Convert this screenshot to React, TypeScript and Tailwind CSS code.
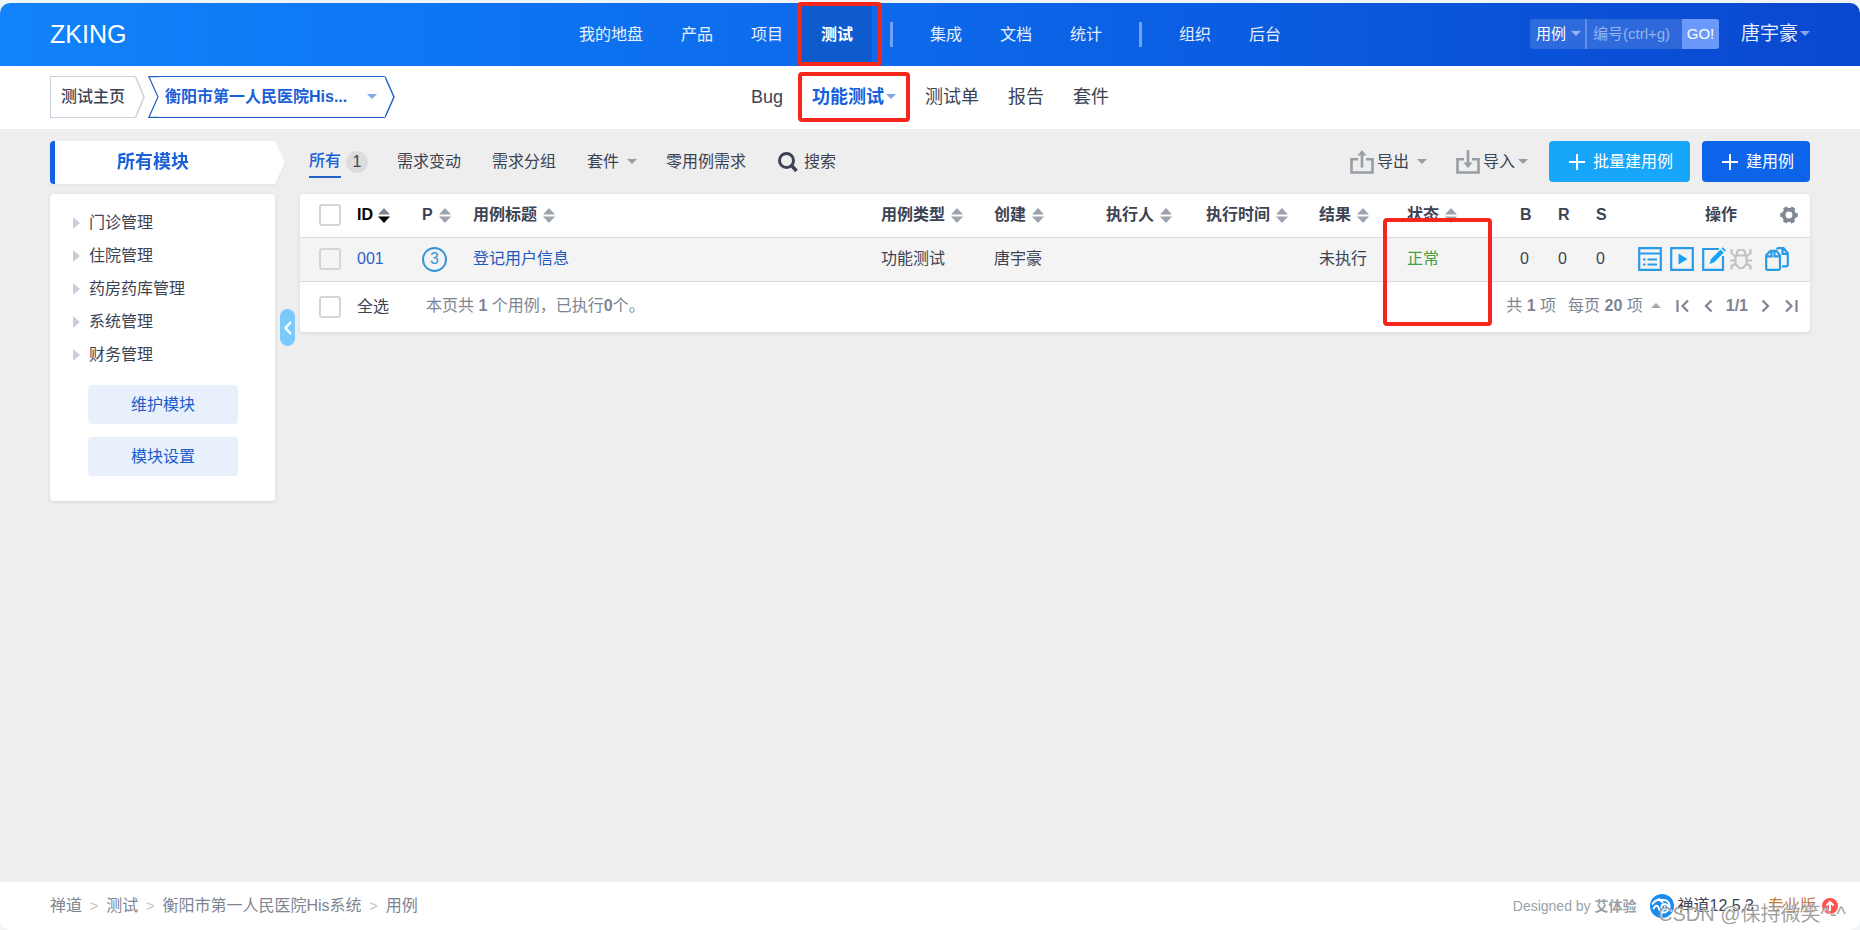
import { useState } from "react";
import type { ReactNode } from "react";

const mainNav = [
  ["我的地盘", "产品", "项目", "测试"],
  ["集成", "文档", "统计"],
  ["组织", "后台"],
];

const modules = ["门诊管理", "住院管理", "药房药库管理", "系统管理", "财务管理"];

const crumbs = ["禅道", "测试", "衡阳市第一人民医院His系统", "用例"];

const columns = [
  { label: "P", width: "w-[51px]" },
  { label: "用例标题", width: "" },
  { label: "用例类型", width: "w-[113px]" },
  { label: "创建", width: "w-[112px]" },
  { label: "执行人", width: "w-[100px]" },
  { label: "执行时间", width: "w-[113px]" },
  { label: "结果", width: "w-[88px]" },
  { label: "状态", width: "w-[113px]" },
];

function Caret({ className = "", up = false }: { className?: string; up?: boolean }) {
  return (
    <svg viewBox="0 0 10 5" className={`h-[5px] w-[10px] shrink-0 ${className}`} fill="currentColor">
      <path d={up ? "M0 5h10L5 0z" : "M0 0h10L5 5z"} />
    </svg>
  );
}

function SortIcon({ active = false }: { active?: boolean }) {
  return (
    <svg viewBox="0 0 12 15" className="h-[15px] w-3 shrink-0">
      <path d="M0 6.4 6 0l6 6.4z" fill={active ? "#80868f" : "#9ca3ad"} />
      <path d="M0 8.6 6 15l6-6.4z" fill={active ? "#000000" : "#9ca3ad"} />
    </svg>
  );
}

function Checkbox({ label }: { label: string }) {
  return (
    <input
      type="checkbox"
      aria-label={label}
      className="block size-[22px] appearance-none rounded-[3px] border-2 border-[#d5d5d5] checked:bg-[#1183fb]"
    />
  );
}

// Red marker frame laid over the element it points out
function Marker({ className }: { className: string }) {
  return <span className={`pointer-events-none absolute z-10 rounded border-4 border-[#f5261b] ${className}`} />;
}

function Plus() {
  return (
    <svg viewBox="0 0 16 16" className="size-4 shrink-0" stroke="currentColor" strokeWidth="2">
      <path d="M8 0v16M0 8h16" />
    </svg>
  );
}

function TransferIcon({ down = false }: { down?: boolean }) {
  return (
    <svg viewBox="0 0 24 24" className="size-6 shrink-0 text-[#979da5]" fill="none" stroke="currentColor" strokeWidth="2.600">
      <path d="M8 9.300H1.500v13.200h21V9.300H16" />
      <path d={down ? "M12 0v14" : "M12 4v13.500"} />
      <path d={down ? "M7.500 12.500h9L12 18z" : "M7.500 5.500h9L12 0z"} fill="currentColor" stroke="none" />
    </svg>
  );
}

function Pager({ label, d }: { label: string; d: string }) {
  return (
    <button type="button" aria-label={label} className="text-[#7d8594]">
      <svg viewBox="0 0 14 14" className="size-[14px]" fill="none" stroke="currentColor" strokeWidth="2.200">
        <path d={d} />
      </svg>
    </button>
  );
}

function Action({ label, className = "text-[#2a9ae6]", children }: { label: string; className?: string; children: ReactNode }) {
  return (
    <button type="button" aria-label={label} className={className}>
      <svg viewBox="0 0 24 24" className="size-6" fill="none" stroke="currentColor" strokeWidth="2.200">
        {children}
      </svg>
    </button>
  );
}

function Header() {
  return (
    <header className="flex h-[63px] shrink-0 items-center rounded-t-[10px] bg-linear-to-r from-[#1183fb] via-[#0d67e9] to-[#0a47cf] px-[50px] text-white">
      <a href="#" className="flex-1 pb-[2px] text-[25px] leading-8">
        ZKING
      </a>
      <nav className="flex h-full items-center">
        {mainNav.map((group, i) => (
          <div key={group[0]} className="flex h-full items-center">
            {i > 0 && <span className="mx-[18px] h-[25px] w-[3px] bg-[#6ea3f5]" />}
            {group.map((item) => (
              <a
                key={item}
                href="#"
                className={`relative flex h-full items-center px-[19px] ${
                  item === "测试" ? "bg-[#0d5bcd] font-bold" : "text-white/90"
                }`}
              >
                {item}
                {item === "测试" && <Marker className="-top-px -right-[10px] bottom-0 -left-[5px]" />}
              </a>
            ))}
          </div>
        ))}
      </nav>
      <div className="flex flex-1 items-center justify-end pb-[2px]">
        <div className="flex h-[30px] overflow-hidden rounded-[3px] bg-white/15">
          <button type="button" className="flex w-[57px] items-center justify-between border-r-2 border-white/25 pr-1 pl-[6px] text-[15px]">
            用例
            <Caret className="text-white/50" />
          </button>
          <input
            aria-label="编号"
            placeholder="编号(ctrl+g)"
            className="w-[95px] bg-transparent pl-[6px] text-[15px] outline-none placeholder:text-white/50"
          />
          <button type="button" className="w-[37px] bg-[#6b99fb] text-[15px]">
            GO!
          </button>
        </div>
        <button type="button" className="ml-[22px] flex items-center gap-[2px] text-[19px] text-white/90">
          唐宇豪
          <Caret className="text-white/50" />
        </button>
      </div>
    </header>
  );
}

function SubHeader() {
  return (
    <div className="flex h-[63px] shrink-0 items-center bg-white px-[50px] pb-[2px]">
      <div className="flex flex-1 items-center gap-[3px]">
        <a href="#" className="flex h-[42px] items-center font-medium text-[#3c4353]">
          <span className="flex h-full items-center border border-r-0 border-[#cbd0db] pr-[10px] pl-[10px]">测试主页</span>
          <svg viewBox="0 0 10 42" className="h-[42px] w-[10px]" fill="none" stroke="#cbd0db" strokeWidth="1.500">
            <path d="M.5.5 9 21 .5 41.500" />
          </svg>
        </a>
        <button type="button" className="flex h-[42px] items-center font-bold text-[#1b60d6]">
          <svg viewBox="0 0 11 42" className="h-[42px] w-[11px]" fill="none" stroke="#2262c6" strokeWidth="1.200">
            <path d="M11 .6H.8L10 21 .8 41.400H11" />
          </svg>
          <span className="flex h-full w-[226px] items-center justify-between border-y border-[#2262c6] pr-2 pl-[6px]">
            衡阳市第一人民医院His...
            <Caret className="text-[#7fa9e8]" />
          </span>
          <svg viewBox="0 0 10 42" className="h-[42px] w-[10px]" fill="none" stroke="#2262c6" strokeWidth="1.500">
            <path d="M0 .7 9 21 0 41.300" />
          </svg>
        </button>
      </div>
      <nav className="flex items-center gap-[29px] text-[18px] text-[#3c4353]">
        <a href="#">Bug</a>
        <a href="#" className="relative flex items-center gap-[2px] font-bold text-[#1460dd]">
          功能测试
          <Caret className="text-[#7fa9e8]" />
          <Marker className="-inset-x-[14px] -inset-y-[13px]" />
        </a>
        <a href="#">测试单</a>
        <a href="#">报告</a>
        <a href="#">套件</a>
      </nav>
      <div className="flex-1" />
    </div>
  );
}

function Toolbar() {
  return (
    <div className="flex h-[43px] items-center justify-between text-[#3c4353]">
      <div className="flex items-center pb-[2px] pl-[9px]">
        <a href="#" className="flex items-center gap-[5px]">
          <span className="border-b-2 border-[#2262c6] leading-[30px] font-medium text-[#1b60d6]">所有</span>
          <span className="flex size-[22px] items-center justify-center rounded-full bg-[#dcdcdc]">1</span>
        </a>
        <a href="#" className="ml-[29px]">需求变动</a>
        <a href="#" className="ml-[31px]">需求分组</a>
        <button type="button" className="ml-[31px] flex items-center gap-2">
          套件
          <Caret className="text-[#979da5]" />
        </button>
        <a href="#" className="ml-[29px]">零用例需求</a>
        <button type="button" className="ml-8 flex items-center gap-[6px]">
          <svg viewBox="0 0 20 20" className="size-5" fill="none" stroke="currentColor" strokeWidth="3">
            <circle cx="8.500" cy="8.500" r="7" />
            <path d="m13.500 13.500 5 5.500" strokeWidth="3.500" />
          </svg>
          搜索
        </button>
      </div>
      <div className="flex items-center pb-[2px]">
        <button type="button" className="flex items-center">
          <TransferIcon />
          <span className="ml-[3px]">导出</span>
          <Caret className="ml-2 text-[#979da5]" />
        </button>
        <button type="button" className="ml-[29px] flex items-center">
          <TransferIcon down />
          <span className="ml-[3px]">导入</span>
          <Caret className="ml-[3px] text-[#979da5]" />
        </button>
        <button type="button" className="ml-[21px] flex h-[41px] items-center gap-2 rounded bg-[#18a6fa] pr-[17px] pl-5 text-white">
          <Plus />
          批量建用例
        </button>
        <button type="button" className="ml-3 flex h-[41px] items-center gap-2 rounded bg-[#0c64eb] pr-4 pl-5 text-white">
          <Plus />
          建用例
        </button>
      </div>
    </div>
  );
}

function CaseTable() {
  return (
    <div className="relative mt-[10px] rounded bg-white shadow-[0_1px_4px_rgba(0,0,0,0.1)]">
      <table className="w-full table-fixed text-left text-[#3c4353]">
        <thead>
          <tr className="h-[43px] border-b border-[#dadada]">
            <th className="w-[57px] pl-[19px]">
              <Checkbox label="选择全部用例" />
            </th>
            <th className="w-[65px] text-black">
              <span className="flex items-center gap-[5px]">
                ID
                <SortIcon active />
              </span>
            </th>
            {columns.map((col) => (
              <th key={col.label} className={col.width}>
                <span className="flex items-center gap-[6px]">
                  {col.label}
                  <SortIcon />
                </span>
              </th>
            ))}
            <th className="w-[38px]">B</th>
            <th className="w-[38px]">R</th>
            <th className="w-[38px]">S</th>
            <th className="w-[176px]">
              <span className="flex items-center justify-between pr-3 pl-[71px]">
                操作
                <svg viewBox="0 0 18 18" className="size-[18px]" fill="none" stroke="#808896">
                  <circle cx="9" cy="9" r="5.300" strokeWidth="3.800" />
                  <circle cx="9" cy="9" r="7.600" strokeWidth="2.400" strokeDasharray="4.200 3.759" strokeDashoffset="2.100" />
                </svg>
              </span>
            </th>
          </tr>
        </thead>
        <tbody>
          <tr className="h-[44px] border-b border-[#dadada] bg-[#f4f4f4]">
            <td className="pl-[19px]">
              <Checkbox label="选择用例 001" />
            </td>
            <td>
              <a href="#" className="text-[#2b62cc]">001</a>
            </td>
            <td>
              <span className="flex size-[25px] items-center justify-center rounded-full border-2 border-[#3796d8] text-[#3796d8]">
                3
              </span>
            </td>
            <td>
              <a href="#" className="text-[#1f5bbd]">登记用户信息</a>
            </td>
            <td>功能测试</td>
            <td>唐宇豪</td>
            <td />
            <td />
            <td>未执行</td>
            <td className="text-[#43a047]">正常</td>
            <td>0</td>
            <td>0</td>
            <td>0</td>
            <td>
              <div className="flex items-center pl-1">
                <Action label="详情">
                  <path d="M1.200 1.200h21.600v21.600H1.200zM1 6.500h22M9.500 12.500H19M9.500 17.500H19M5 12.500h2.500M5 17.500h2.500" />
                </Action>
                <Action label="执行" className="ml-2 text-[#2a9ae6]">
                  <path d="M1.200 1.200h21.600v21.600H1.200z" />
                  <path d="M8.500 6.500v11l9-5.500z" fill="#18a0f5" stroke="none" />
                </Action>
                <Action label="编辑" className="ml-2 text-[#2a9ae6]">
                  <path d="M17 2H1.200v20.800H21V9" />
                  <path d="m7.500 17 1.500-5L18.500 2.500l3.200 3.200-9.500 9.500zM19.500 1.500l1.200-1.300L24 3.300l-1.300 1.400z" fill="#18a0f5" stroke="none" />
                </Action>
                <Action label="转Bug" className="ml-[3px] text-[#c2c2c2]">
                  <path d="M6.500 8.500h11V17l-3.500 4h-4l-3.500-4zM8 8.500V5l1.500-2h5L16 5v3.500M2.500 2v4l4 3.500M21.500 2v4l-4 3.500M1 13.500h5.500M17.500 13.500H23M2.500 22.500v-3.500l4-2.500M21.500 22.500v-3.500l-4-2.500" />
                </Action>
                <Action label="复制" className="ml-3 text-[#2a9ae6]">
                  <path d="M5.500 3.800h6L15 8.500v13q0 1.300-1.300 1.300H2.500q-1.300 0-1.300-1.300V8.300zM6.500 4v5.300H1.500M9.500 4.500V9.300H15" />
                  <path d="M11.500 2.200 13 1.200h5.500l4.300 5V18q0 1.300-1.300 1.300H17M17.500 1.500V6.800h5" />
                </Action>
              </div>
            </td>
          </tr>
        </tbody>
      </table>
      <div className="flex h-[50px] items-center pr-3 pl-[19px] text-[#7d8594]">
        <label className="flex items-center gap-4 text-[#3c4353]">
          <Checkbox label="全选" />
          全选
        </label>
        <span className="ml-[37px] pb-[2px]">
          本页共 <b>1</b> 个用例，已执行<b>0</b>个。
        </span>
        <div className="ml-auto flex items-center pb-[2px]">
          <span>
            共 <b>1</b> 项
          </span>
          <button type="button" className="ml-3 flex items-center gap-2">
            <span>
              每页 <b>20</b> 项
            </span>
            <Caret up className="text-[#a3a8b0]" />
          </button>
          <span className="ml-[15px] flex items-center gap-[11px]">
            <Pager label="首页" d="M1.500 1v12M12 1.500 6.500 7l5.500 5.500" />
            <Pager label="上一页" d="M10.500 1.500 5 7l5.500 5.500" />
            <b className="font-semibold">1/1</b>
            <Pager label="下一页" d="M3.500 1.500 9 7l-5.500 5.500" />
            <Pager label="末页" d="M2 1.500 7.500 7 2 12.500M12.500 1v12" />
          </span>
        </div>
      </div>
      <Marker className="top-6 right-[318px] h-[108px] w-[109px]" />
    </div>
  );
}

function Sidebar({ open, onToggle }: { open: boolean; onToggle: () => void }) {
  return (
    <aside className={`relative shrink-0 ${open ? "w-[250px]" : "w-[25px]"}`}>
      {open && (
        <>
          <div className="mr-[15px] flex h-[43px] overflow-hidden drop-shadow-xs">
            <h2 className="flex flex-1 items-center rounded-l border-l-[5px] border-[#1262e0] bg-white pb-[2px] pl-[62px] text-[18px] font-bold text-[#1b60d6]">
              所有模块
            </h2>
            <svg viewBox="0 0 10 43" className="h-[43px] w-[10px]" fill="#ffffff">
              <path d="M0 0 10 21.500 0 43z" />
            </svg>
          </div>
          <div className="mt-[10px] mr-[25px] rounded bg-white px-[23px] pt-3 pb-[25px] shadow-[0_1px_4px_rgba(0,0,0,0.1)]">
            <ul className="text-[#3c4353]">
              {modules.map((name) => (
                <li key={name} className="flex h-[33px] items-center gap-[9px]">
                  <svg viewBox="0 0 7 12" className="h-3 w-[7px]" fill="#c9cedb">
                    <path d="M0 0v12l7-6z" />
                  </svg>
                  <a href="#">{name}</a>
                </li>
              ))}
            </ul>
            <div className="mt-[14px] mr-[14px] ml-[15px] flex flex-col gap-[13px] text-[#1d5bc9]">
              <button type="button" className="h-[39px] rounded bg-[#e8f1fb]">维护模块</button>
              <button type="button" className="h-[39px] rounded bg-[#e8f1fb]">模块设置</button>
            </div>
          </div>
        </>
      )}
      <button
        type="button"
        aria-label="折叠模块"
        onClick={onToggle}
        className="absolute top-[168px] right-[5px] flex h-[37px] w-[15px] items-center justify-center rounded-full bg-[#79cbfb] text-white"
      >
        <svg viewBox="0 0 8 14" className="h-[14px] w-2" fill="none" stroke="currentColor" strokeWidth="2.400">
          <path d={open ? "M7 1 1.500 7 7 13" : "M1 1l5.500 6L1 13"} />
        </svg>
      </button>
    </aside>
  );
}

function Footer() {
  return (
    <footer className="relative flex h-12 shrink-0 items-center justify-between rounded-b-[10px] bg-white pr-[22px] pl-[50px] text-[#7d8594]">
      <nav className="flex items-center gap-2">
        {crumbs.map((crumb, i) => (
          <span key={crumb} className="flex items-center gap-2">
            {i > 0 && <span className="text-sm text-[#c4c4c4]">&gt;</span>}
            <a href="#">{crumb}</a>
          </span>
        ))}
      </nav>
      <div className="flex items-center">
        <span className="text-sm text-[#9a9fa8]">
          Designed by <b>艾体验</b>
        </span>
        <svg viewBox="0 0 24 24" className="ml-[14px] size-6">
          <circle cx="12" cy="12" r="12" fill="#1a8cf0" />
          <path
            d="M2.500 10C6 4.500 10 5.500 12.500 8M19 15c2-6-2-9.500-6-9-3 .3-4.500-1-4.500-1M3.500 14.500c2-3.500 4-3.500 5-1 1 4 4 6 7.500 4.500 3.500-2 3-7.500-1-8-4-.3-5 5-1.500 5 1.500 0 2-1.500 1.200-2.500"
            fill="none"
            stroke="#ffffff"
            strokeWidth="1.900"
            strokeLinecap="round"
          />
        </svg>
        <a href="#" className="ml-[3px] text-[#3c4353]">禅道12.5.3</a>
        <a href="#" className="ml-[14px] text-[#c07a3c]">专业版</a>
        <svg viewBox="0 0 16 16" className="ml-[6px] size-4">
          <circle cx="8" cy="8" r="8" fill="#ff5050" />
          <path d="M8 13V4M4.500 7.500 8 4l3.500 3.500" fill="none" stroke="#ffffff" strokeWidth="2" />
        </svg>
      </div>
      <span className="pointer-events-none absolute right-[14px] bottom-1 text-[20px] leading-6 text-[#8f8f8f]/85 text-shadow-[1px_1px_1px_#ffffff]">
        CSDN @保持微笑^-^
      </span>
    </footer>
  );
}

export default function App() {
  const [open, setOpen] = useState(true);

  return (
    <div className="flex min-h-screen flex-col bg-[#f1f5f7] pt-[3px] font-['Liberation_Sans','Noto_Sans_CJK_SC',sans-serif] text-[16px] leading-6">
      <Header />
      <SubHeader />
      <main className="flex flex-1 bg-[#eeeeee] px-[50px] pt-3">
        <Sidebar open={open} onToggle={() => setOpen(!open)} />
        <section className="min-w-0 flex-1">
          <Toolbar />
          <CaseTable />
        </section>
      </main>
      <Footer />
    </div>
  );
}
